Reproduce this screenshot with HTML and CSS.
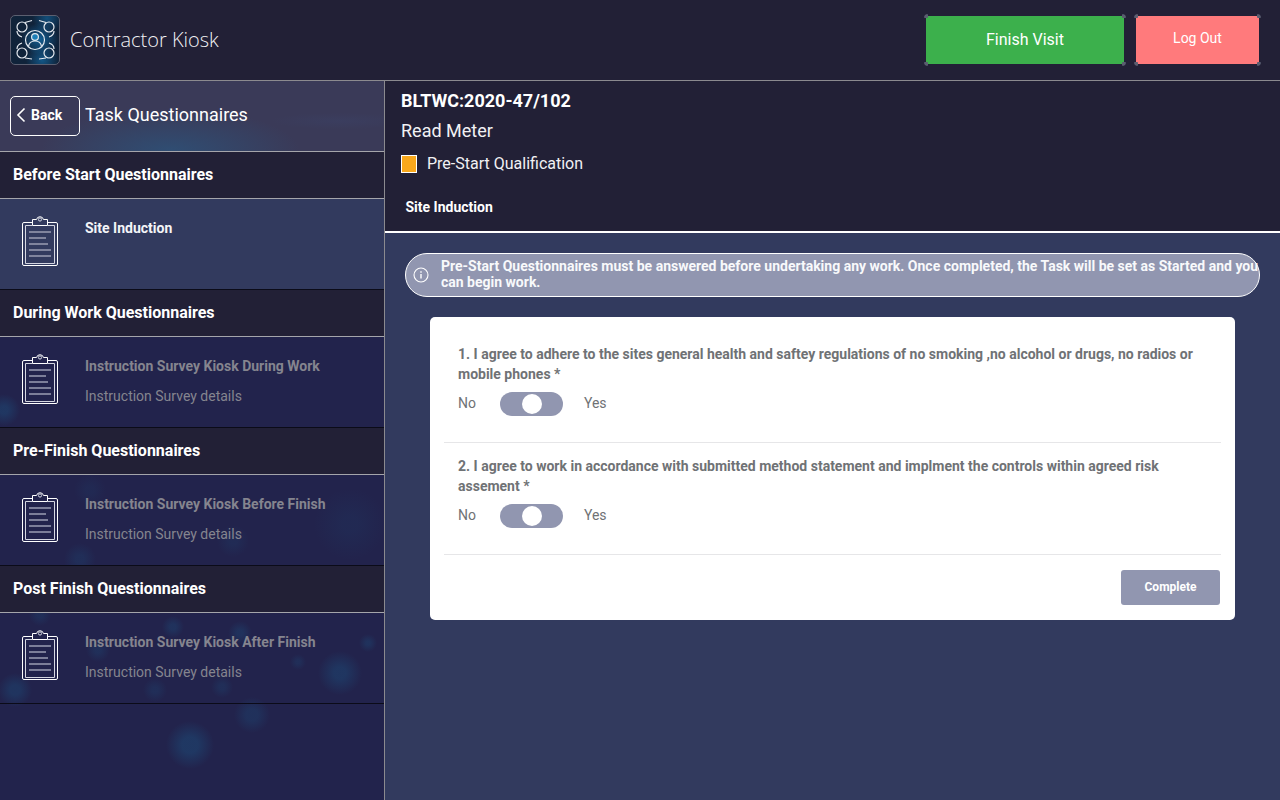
FILE: index.html
```html
<!DOCTYPE html>
<html lang="en">
<head>
    <meta charset="UTF-8">
    <title>Contractor Kiosk</title>
    <link rel="stylesheet" href="styles.css">
</head>
<body>
    <svg class="icon-defs" width="0" height="0">
        <symbol id="clipboard" viewBox="0 0 36 52">
            <path d="M10.5 8.5H2a1.5 1.5 0 0 0-1.5 1.5v40a1.5 1.5 0 0 0 1.5 1.5h32a1.5 1.5 0 0 0 1.5-1.5V10A1.5 1.5 0 0 0 34 8.5h-8.5" fill="none" stroke="#fff"/>
            <path d="M10.5 11.5v-6h4a3.6 3.6 0 0 1 7 0h4v6z" fill="none" stroke="#fff"/>
            <path d="M10.5 11.5h-7v38h29v-38h-7" fill="none" stroke="#d5d7e2"/>
            <circle cx="18" cy="5.5" r="1.6" fill="none" stroke="#d5d7e2"/>
            <path d="M7 18h22M7 24h17M7 30h19M7 36h22M7 42h22" stroke="#9a9db3" stroke-width="1.3"/>
        </symbol>
    </svg>

    <header class="topbar">
        <div class="brand">
            <div class="logo">
                <svg width="48" height="48" viewBox="0 0 48 48" fill="none" stroke="#e4e9ef" stroke-width="1.2">
                    <circle cx="24" cy="24" r="9.5"/>
                    <circle cx="24" cy="21" r="3.4" stroke="#dfe8ee" fill="#1b7fb8"/>
                    <path d="M17.5 30.5c.5-4 3-5.5 6.5-5.5s6 1.5 6.5 5.5"/>
                    <circle cx="11" cy="11" r="5"/>
                    <circle cx="38" cy="11" r="5"/>
                    <circle cx="11" cy="37" r="5"/>
                    <circle cx="38" cy="37" r="5"/>
                    <path d="M14 6.5l7-2M35 6.5l-7-2M6 15c0 3 2 5 5 6M43 15c0 3-2 5-5 6M6 33c0-3 2-5 5-6M43 33c0-3-2-5-5-6M14 42l7 1M35 42l-7 1"/>
                </svg>
            </div>
            <span class="brand-name">Contractor Kiosk</span>
        </div>
        <div class="top-actions">
            <button class="btn-top btn-finish">Finish Visit</button>
            <button class="btn-top btn-logout">Log Out</button>
        </div>
    </header>

    <div class="content">
        <aside class="sidebar">
            <div class="side-title">
                <button class="btn-back">
                    <svg width="10" height="16" viewBox="0 0 10 16" fill="none" stroke="#fff" stroke-width="1.6"><path d="M8.5 1.5L2 8l6.5 6.5"/></svg>
                    Back
                </button>
                <span class="side-title-text">Task Questionnaires</span>
            </div>

            <div class="section-head">Before Start Questionnaires</div>
            <div class="task active">
                <svg class="task-icon"><use href="#clipboard"/></svg>
                <div class="task-text"><div class="task-name">Site Induction</div></div>
            </div>

            <div class="section-head">During Work Questionnaires</div>
            <div class="task">
                <svg class="task-icon"><use href="#clipboard"/></svg>
                <div class="task-text">
                    <div class="task-name">Instruction Survey Kiosk During Work</div>
                    <div class="task-sub">Instruction Survey details</div>
                </div>
            </div>

            <div class="section-head">Pre-Finish Questionnaires</div>
            <div class="task">
                <svg class="task-icon"><use href="#clipboard"/></svg>
                <div class="task-text">
                    <div class="task-name">Instruction Survey Kiosk Before Finish</div>
                    <div class="task-sub">Instruction Survey details</div>
                </div>
            </div>

            <div class="section-head">Post Finish Questionnaires</div>
            <div class="task">
                <svg class="task-icon"><use href="#clipboard"/></svg>
                <div class="task-text">
                    <div class="task-name">Instruction Survey Kiosk After Finish</div>
                    <div class="task-sub">Instruction Survey details</div>
                </div>
            </div>
        </aside>

        <main class="main">
            <div class="job">
                <div class="job-code">BLTWC:2020-47/102</div>
                <div class="job-name">Read Meter</div>
                <div class="job-status"><span class="status-box"></span>Pre-Start Qualification</div>
                <div class="job-tab">Site Induction</div>
            </div>

            <div class="body-area">
                <div class="notice">
                    <svg width="16" height="16" viewBox="0 0 16 16" fill="none" stroke="#fff" stroke-width="1.1">
                        <circle cx="8" cy="8" r="7"/>
                        <path d="M8 7v4.5" stroke-width="1.4"/>
                        <path d="M8 4.2v1.5" stroke-width="1.4"/>
                    </svg>
                    <p>Pre-Start Questionnaires must be answered before undertaking any work. Once completed, the Task will be set as Started and you can begin work.</p>
                </div>

                <div class="card">
                    <div class="question">
                        <div class="q-text">1. I agree to adhere to the sites general health and saftey regulations of no smoking ,no alcohol or drugs, no radios or mobile phones *</div>
                        <div class="q-toggle">
                            <span class="q-label">No</span>
                            <span class="toggle"><span class="knob"></span></span>
                            <span class="q-label">Yes</span>
                        </div>
                    </div>
                    <div class="question">
                        <div class="q-text">2. I agree to work in accordance with submitted method statement and implment the controls within agreed risk assement *</div>
                        <div class="q-toggle">
                            <span class="q-label">No</span>
                            <span class="toggle"><span class="knob"></span></span>
                            <span class="q-label">Yes</span>
                        </div>
                    </div>
                    <div class="card-foot">
                        <button class="btn-complete">Complete</button>
                    </div>
                </div>
            </div>
        </main>
    </div>
</body>
</html>
```

FILE: styles.css
```css
* {
    box-sizing: border-box;
}
body {
    margin: 0;
    height: 800px;
    overflow: hidden;
    font-family: "Roboto", sans-serif;
    background-color: #323a5e;
    color: #fff;
}
button {
    font-family: "Roboto", sans-serif;
    color: #fff;
    border: none;
    cursor: pointer;
}
.icon-defs {
    position: absolute;
}

/* top bar */
.topbar {
    height: 81px;
    display: flex;
    justify-content: space-between;
    align-items: center;
    padding: 0 19px 1px 10px;
    background-color: #222036;
    border-bottom: 1px solid #8b8a8f;
}
.brand {
    display: flex;
    align-items: center;
    gap: 10px;
}
.logo {
    width: 50px;
    height: 50px;
    border: 1px solid #5c5f70;
    border-radius: 5px;
    overflow: hidden;
    background-color: #10233a;
    background-image:
        radial-gradient(ellipse at 60% 48%, rgba(20, 120, 185, 0.7), transparent 45%),
        radial-gradient(circle at 65% 92%, rgba(20, 120, 185, 0.6), transparent 30%),
        radial-gradient(circle at 75% 5%, rgba(20, 120, 185, 0.5), transparent 25%);
}
.logo svg {
    display: block;
}
.brand-name {
    font-family: "Open Sans", sans-serif;
    font-weight: 300;
    font-size: 20px;
    color: #f1f1f4;
}
.top-actions {
    display: flex;
    gap: 8px;
}
/* grey dots on the button corners sit half outside the fill */
.btn-top {
    height: 52px;
    border: 2px solid transparent;
    border-radius: 4px;
    background-color: transparent;
    background-image:
        radial-gradient(circle at 2px 2px, #5a5d70 2px, transparent 2.5px),
        radial-gradient(circle at calc(100% - 2px) 2px, #5a5d70 2px, transparent 2.5px),
        radial-gradient(circle at 2px calc(100% - 2px), #5a5d70 2px, transparent 2.5px),
        radial-gradient(circle at calc(100% - 2px) calc(100% - 2px), #5a5d70 2px, transparent 2.5px),
        linear-gradient(var(--fill), var(--fill));
    background-origin: border-box;
    background-clip: border-box, border-box, border-box, border-box, padding-box;
}
.btn-finish {
    --fill: #3cb04c;
    width: 202px;
    font-size: 16px;
}
.btn-logout {
    --fill: #ff7a7c;
    width: 127px;
    font-size: 14px;
    padding-bottom: 5px;
}

.content {
    display: flex;
    height: 719px;
}

/* sidebar */
.sidebar {
    width: 385px;
    flex-shrink: 0;
    border-right: 1px solid #8b8a8f;
    background-color: #22234c;
    background-image:
        radial-gradient(circle at 190px 664px, rgba(28, 84, 130, 0.42) 8px, transparent 24px),
        radial-gradient(circle at 252px 634px, rgba(28, 84, 130, 0.28) 6px, transparent 18px),
        radial-gradient(circle at 340px 592px, rgba(28, 84, 130, 0.38) 6px, transparent 22px),
        radial-gradient(circle at 15px 609px, rgba(28, 84, 130, 0.35) 5px, transparent 17px),
        radial-gradient(circle at 155px 609px, rgba(28, 84, 130, 0.22) 3px, transparent 12px),
        radial-gradient(circle at 222px 606px, rgba(28, 84, 130, 0.22) 3px, transparent 11px),
        radial-gradient(circle at 173px 546px, rgba(28, 84, 130, 0.3) 3px, transparent 11px),
        radial-gradient(circle at 240px 552px, rgba(28, 84, 130, 0.3) 3px, transparent 12px),
        radial-gradient(circle at 368px 562px, rgba(28, 84, 130, 0.3) 2px, transparent 9px),
        radial-gradient(circle at 98px 569px, rgba(28, 84, 130, 0.25) 3px, transparent 12px),
        radial-gradient(circle at 298px 581px, rgba(28, 84, 130, 0.22) 2px, transparent 8px),
        radial-gradient(circle at 40px 534px, rgba(28, 84, 130, 0.22) 3px, transparent 11px),
        radial-gradient(circle at 80px 478px, rgba(28, 84, 130, 0.22) 4px, transparent 16px),
        radial-gradient(circle at 233px 460px, rgba(28, 84, 130, 0.16) 4px, transparent 16px),
        radial-gradient(circle at 90px 409px, rgba(28, 84, 130, 0.12) 4px, transparent 16px),
        radial-gradient(circle at 350px 443px, rgba(28, 84, 130, 0.12) 8px, transparent 36px),
        radial-gradient(circle at 4px 329px, rgba(28, 84, 130, 0.4) 4px, transparent 16px);
}
.side-title {
    height: 71px;
    display: flex;
    align-items: center;
    gap: 5px;
    padding-left: 10px;
    font-size: 18px;
    background-color: #3a3a58;
    background-image:
        radial-gradient(ellipse at 170px 70px, rgba(44, 84, 124, 0.75), transparent 130px),
        radial-gradient(ellipse at 340px 40px, rgba(60, 70, 110, 0.3), transparent 70px);
    border-bottom: 1px solid #a5a5ab;
}
.side-title-text {
    margin-bottom: 3px;
}
.btn-back {
    width: 70px;
    height: 40px;
    display: flex;
    align-items: center;
    gap: 5px;
    padding: 0 0 2px 5px;
    background: transparent;
    border: 1px solid #fff;
    border-radius: 5px;
    font-size: 14px;
    font-weight: 700;
}
.section-head {
    height: 47px;
    padding: 13px 0 0 13px;
    font-size: 16px;
    font-weight: 700;
    background-color: #222036;
    border-bottom: 1px solid #a5a5ab;
}
.task {
    height: 91px;
    display: flex;
    gap: 27px;
    padding: 15px 0 0 22px;
    border-bottom: 1px solid #0b0b18;
}
.task.active {
    background-color: #323a5e;
}
.task-icon {
    width: 36px;
    height: 52px;
    flex-shrink: 0;
}
.task-name {
    font-size: 14px;
    font-weight: 700;
    line-height: 16px;
    margin-top: 6px;
    color: #85858f;
}
.active .task-name {
    color: #f4f5f8;
}
.task-sub {
    font-size: 14px;
    line-height: 16px;
    margin-top: 14px;
    color: #85858f;
}

/* main */
.main {
    flex: 1;
    min-width: 0;
}
.job {
    height: 152px;
    padding: 9px 0 0 16px;
    background-color: #222036;
    border-bottom: 2px solid #fff;
}
.job-code {
    font-size: 18px;
    font-weight: 700;
    line-height: 21px;
}
.job-name {
    font-size: 18px;
    line-height: 21px;
    margin-top: 9px;
    color: #f1f1f4;
}
.job-status {
    display: flex;
    align-items: center;
    gap: 10px;
    font-size: 16px;
    line-height: 20px;
    margin-top: 13px;
    color: #f1f1f4;
}
.status-box {
    width: 16px;
    height: 18px;
    background-color: #f9a81c;
    border: 1px solid #fff;
}
.job-tab {
    font-size: 14px;
    font-weight: 700;
    line-height: 16px;
    margin: 25px 0 0 4.5px;
}
.body-area {
    padding: 20px 20px 0;
}
.notice {
    height: 44px;
    display: flex;
    align-items: center;
    gap: 12px;
    padding-left: 7px;
    background-color: #9196b0;
    border: 1px solid #fff;
    border-radius: 22px;
}
.notice svg {
    flex-shrink: 0;
}
.notice p {
    margin: 0 -4px 2px 0;
    flex: 1;
    min-width: 0;
    font-size: 14px;
    font-weight: 700;
    line-height: 16px;
    color: #f8f9fb;
}
.card {
    width: 805px;
    height: 303px;
    margin: 20px 0 0 25px;
    padding: 14px 14px 0;
    background-color: #fff;
    border-radius: 5px;
    color: #6f7275;
}
.question {
    height: 112px;
    padding: 13px 14px 0;
    border-bottom: 1px solid #e6e6e8;
}
.q-text {
    font-size: 14px;
    font-weight: 700;
    line-height: 20px;
}
.q-toggle {
    display: flex;
    align-items: center;
    margin-top: 8px;
    font-size: 14px;
    height: 24px;
}
.q-label {
    padding-bottom: 2px;
}
.toggle {
    width: 63px;
    height: 24px;
    margin: 0 21px 0 24px;
    display: flex;
    align-items: center;
    justify-content: center;
    background-color: #9196b0;
    border-radius: 12px;
}
.knob {
    width: 20px;
    height: 20px;
    margin-left: 1px;
    background-color: #fff;
    border-radius: 50%;
}
.card-foot {
    display: flex;
    justify-content: flex-end;
    padding: 15px 1px 0 0;
}
.btn-complete {
    width: 99px;
    height: 35px;
    padding-bottom: 2px;
    background-color: #9196b0;
    border-radius: 3px;
    font-size: 12px;
    font-weight: 700;
}
```
